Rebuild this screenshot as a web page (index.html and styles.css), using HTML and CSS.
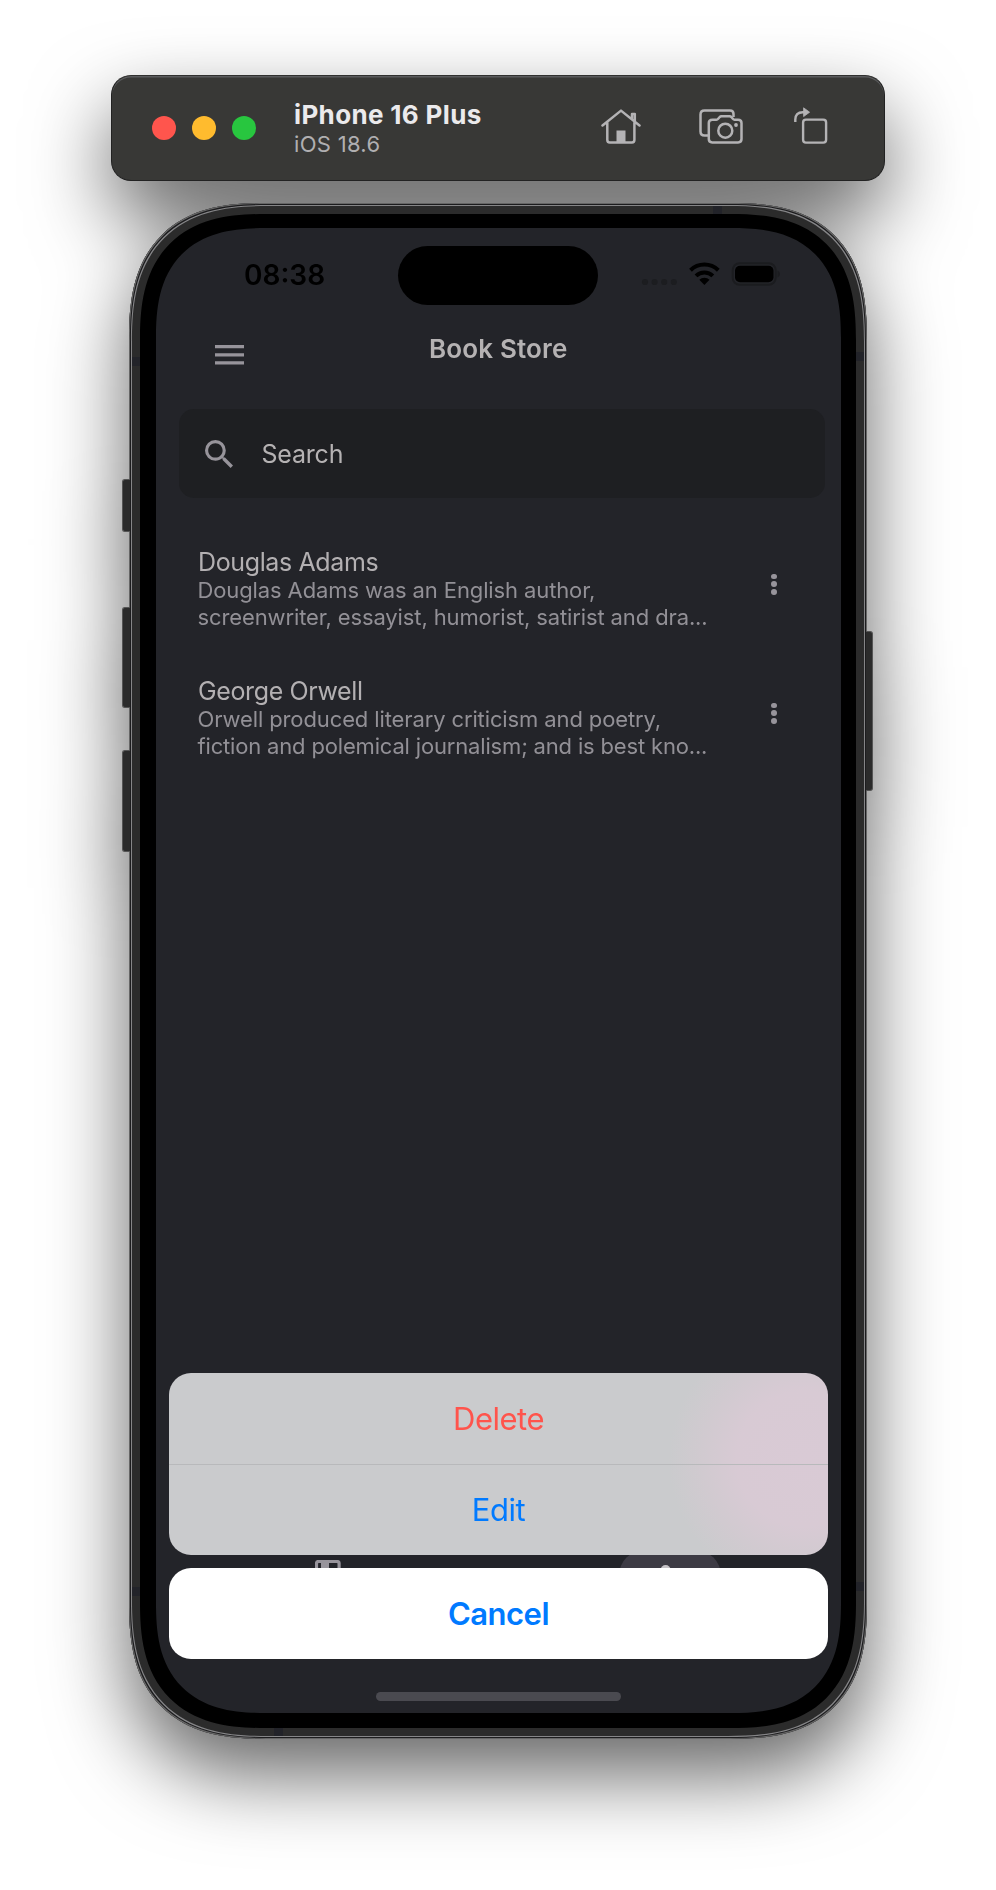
FILE: index.html
```html
<!DOCTYPE html>
<html lang="en">
<head>
<meta charset="utf-8">
<title>iPhone 16 Plus</title>
<link rel="stylesheet" href="styles.css">
</head>
<body>
<main class="simulator">
  <header class="toolbar">
    <div class="lights"><span class="light red"></span><span class="light yellow"></span><span class="light green"></span></div>
    <div class="device-info">
      <div class="device-name">iPhone 16 Plus</div>
      <div class="device-os">iOS 18.6</div>
    </div>
    <div class="tools">
      <svg class="tool-home" width="40" height="36" viewBox="0 0 40 36" fill="none" stroke="#b4b3b5" stroke-width="2.5" stroke-linecap="round" stroke-linejoin="round">
        <path d="M1.500 16.500 20 1.600 38.500 16.500M6.300 13.500V31q0 2.400 2.400 2.400H31q2.400 0 2.400-2.400V13.500M31 10V5h2.800v7.500"/>
        <path d="M15.500 21.500h9v12h-9z" fill="#b4b3b5" stroke="none"/>
      </svg>
      <svg class="tool-camera" width="44" height="36" viewBox="0 0 44 36" fill="none" stroke="#b4b3b5" stroke-width="2.500" stroke-linejoin="round">
        <path d="M9 26.500H5.500q-4 0-4-4V5.500q0-4 4-4H31q3.500 0 3.500 3.500v3"/>
        <path d="M13.400 10.700h4q1 0 1.800-1l1.300-1.500q.8-.9 2-.9h8q1.200 0 2 .9l1.300 1.500q.8 1 1.800 1h3.500q3.400 0 3.400 3.400v16q0 3.400-3.400 3.400H13.200q-3.400 0-3.400-3.400v-16q0-3.400 3.600-3.400z"/>
        <circle cx="26.300" cy="21.700" r="7"/>
        <circle cx="37" cy="16" r="1.900" fill="#b4b3b5" stroke="none"/>
      </svg>
      <svg class="tool-rotate" width="34" height="37" viewBox="0 0 34 37" fill="none" stroke="#b4b3b5" stroke-width="2.400">
        <path d="M1.300 15V12.500q0-7.300 7.500-7.300H10"/>
        <path d="M9.600.8 15.600 5.200 9.600 9.600z" fill="#b4b3b5" stroke="#b4b3b5" stroke-width=".8"/>
        <rect x="9.100" y="12.600" width="23" height="23" rx="2.800"/>
      </svg>
    </div>
  </header>

  <section class="phone">
    <i class="key action"></i><i class="key vol-up"></i><i class="key vol-down"></i><i class="key power"></i>
    <i class="band band-top"></i><i class="band band-bottom"></i>
    <i class="band band-l1"></i><i class="band band-l2"></i><i class="band band-r1"></i><i class="band band-r2"></i>
    <div class="bezel">
      <div class="screen">
        <div class="status">
          <div class="time">08:38</div>
          <div class="island"></div>
          <svg class="status-icons" width="138" height="28" viewBox="0 0 138 28">
            <g fill="#1c1d20"><circle cx="4" cy="22" r="3.100"/><circle cx="13.600" cy="22" r="3.100"/><circle cx="23.200" cy="22" r="3.100"/><circle cx="32.800" cy="22" r="3.100"/></g>
            <g fill="none" stroke="#000" stroke-width="4"><path d="M49.500 10.200a20 20 0 0 1 27.800 0"/><path d="M55 15.900a12 12 0 0 1 16.800 0"/></g>
            <path d="M58.300 19.800a7.300 7.300 0 0 1 10.200 0L63.400 25z"/>
            <rect x="91.700" y="3.200" width="43" height="21.600" rx="7" fill="none" stroke="#1b1c1f" stroke-width="2"/>
            <rect x="94" y="5.800" width="38.500" height="16.400" rx="5"/>
            <path d="M136.500 10.500q2.500 1 2.500 3.500t-2.500 3.500z" fill="#1b1c1f"/>
          </svg>
        </div>
        <div class="appbar">
          <svg class="menu" width="29" height="21" viewBox="0 0 29 21" fill="#97949b"><path d="M0 0h29v3.200H0zM0 8.200h29v3.200H0zM0 16.300h29v3.200H0z"/></svg>
          <div class="app-title">Book Store</div>
        </div>
        <div class="search">
          <svg width="28" height="28" viewBox="3 3 17.500 17.500" fill="#97949b"><path d="M15.500 14h-.79l-.28-.27A6.471 6.471 0 0 0 16 9.500 6.500 6.500 0 1 0 9.500 16c1.610 0 3.090-.59 4.230-1.570l.27.28v.79l5 4.990L20.490 19l-4.990-5zm-6 0C7.010 14 5 11.990 5 9.500S7.010 5 9.500 5 14 7.010 14 9.500 11.990 14 9.500 14z"/></svg>
          <span class="search-label">Search</span>
        </div>
        <div class="list">
          <article class="item">
            <div class="item-text">
              <div class="item-title">Douglas Adams</div>
              <div class="item-desc"><div>Douglas Adams was an English author,</div><div>screenwriter, essayist, humorist, satirist and dra...</div></div>
            </div>
            <div class="dots"><i></i><i></i><i></i></div>
          </article>
          <article class="item">
            <div class="item-text">
              <div class="item-title">George Orwell</div>
              <div class="item-desc"><div>Orwell produced literary criticism and poetry,</div><div class="tight">fiction and polemical journalism; and is best kno...</div></div>
            </div>
            <div class="dots"><i></i><i></i><i></i></div>
          </article>
        </div>
        <nav class="tabs">
          <svg class="tab-book" width="26" height="30" viewBox="0 0 26 30"><rect x="1.500" y="1.500" width="22.600" height="28" rx="2" fill="none" stroke="#97949b" stroke-width="3.200"/><path d="M6 1h8v13l-4-2-4 2z" fill="#97949b"/></svg>
          <div class="tab-pill"><svg width="38" height="38" viewBox="0 0 38 38"><circle cx="14.600" cy="13" r="5" fill="#c5c2c6"/></svg></div>
        </nav>
        <div class="sheet">
          <div class="sheet-group">
            <div class="sheet-btn delete">Delete</div>
            <div class="sheet-btn edit">Edit</div>
          </div>
          <div class="sheet-btn cancel">Cancel</div>
        </div>
        <div class="home-bar"></div>
      </div>
    </div>
  </section>
</main>
</body>
</html>
```
FILE: styles.css
```css
* { box-sizing: border-box; }
body { margin: 0; background: #fff; font-family: Inter, "Liberation Sans", sans-serif; width: 996px; height: 1890px; overflow: hidden; }
.simulator { height: 1890px; padding-top: 75px; display: flex; flex-direction: column; align-items: center; gap: 22px; filter: drop-shadow(0 36px 40px rgba(0,0,0,.6)); }

.toolbar { width: 774px; height: 106px; border-radius: 20px; background: #383836; border: 1px solid #222; border-top-color: #30302f; box-shadow: inset 0 1.500px 0 #5a5b5d; display: flex; align-items: center; padding-left: 40px; }
.lights { display: flex; gap: 16px; }
.light { width: 24px; height: 24px; border-radius: 50%; }
.red { background: #ff554d; }
.yellow { background: #ffbb2e; }
.green { background: #28c63f; }
.device-info { margin-left: 38px; width: 300px; padding-top: 1px; white-space: nowrap; }
.device-name { font-size: 26px; line-height: 30px; font-weight: 700; color: #ebeaec; letter-spacing: .35px; }
.device-os { font-size: 22px; line-height: 28px; color: #b0afb1; letter-spacing: .3px; }
.tools { display: flex; margin: -2px 0 0 7px; }
.tool-camera { margin-left: 58px; }
.tool-rotate { margin: -2px 0 0 51px; }

.phone { position: relative; width: 738px; height: 1536px; border-radius: 116px; padding: 11px; background: #2b2b2b; box-shadow: inset 0 0 0 1px #666, inset 0 0 0 2px #1c1c1e, inset 0 0 0 3px #858587; }
.bezel { height: 1514px; border-radius: 105px; background: #000; padding: 14px 15px 15px 16px; }
.key { position: absolute; width: 8px; background: #2b2b2b; border: 1.500px solid #555; border-right: 0; border-radius: 3px 0 0 3px; left: -7px; }
.action { top: 276px; height: 53px; }
.vol-up { top: 404px; height: 101px; }
.vol-down { top: 547px; height: 102px; }
.power { left: 737px; top: 428px; width: 7px; height: 160px; border: 1.500px solid #555; border-left: 0; border-radius: 0 3px 3px 0; }
.band { position: absolute; background: #222329; width: 8px; height: 9px; }
.band-top { left: 584px; top: 3px; width: 9px; height: 8px; }
.band-bottom { left: 145px; top: 1525px; width: 9px; height: 8px; }
.band-l1 { left: 3px; top: 154px; }
.band-l2 { left: 3px; top: 1384px; }
.band-r1 { left: 727px; top: 149px; }
.band-r2 { left: 727px; top: 1379px; }

.screen { position: relative; width: 685px; height: 1485px; border-radius: 90px; background: #232429; overflow: hidden; }
.status { height: 94px; display: flex; align-items: flex-start; }
.time { width: 242px; padding-left: 88px; padding-top: 29px; font-size: 28px; line-height: 36px; font-weight: 600; color: #000; }
.island { width: 200px; height: 59px; margin-top: 18px; border-radius: 30px; background: #000; }
.status-icons { margin: 32px 0 0 43px; overflow: visible; }
.appbar { height: 87px; display: flex; align-items: flex-start; }
.menu { margin: 23px 0 0 59px; }
.app-title { width: 138px; margin: 9px 0 0 185px; font-size: 26px; line-height: 36px; font-weight: 600; color: #b5b2b3; white-space: nowrap; letter-spacing: .15px; }
.search { margin: 0 16px 0 22.500px; height: 89px; border-radius: 15px; background: #1e1f22; display: flex; align-items: center; padding-left: 26px; gap: 29px; }
.search-label { font-size: 25px; color: #b5b2b3; letter-spacing: -.2px; }
.list { padding: 46px 64px 0 42px; }
.item { height: 129px; display: flex; justify-content: space-between; white-space: nowrap; }
.item-title { font-size: 25px; line-height: 36px; color: #b3b0b2; letter-spacing: -.38px; }
.item-desc { font-size: 22px; line-height: 27px; color: #929096; margin: -3.500px 0 0 -.5px; letter-spacing: -.12px; }
.tight { letter-spacing: -.17px; }
.dots { display: flex; flex-direction: column; gap: 2.200px; padding-top: 29.500px; }
.dots i { width: 5.800px; height: 5.800px; border-radius: 50%; background: #97949b; }

.tabs { position: absolute; left: 0; top: 1322px; width: 685px; height: 60px; display: flex; }
.tab-book { margin: 10px 0 0 159px; }
.tab-pill { width: 102px; height: 51px; border-radius: 26px; background: #3d3b44; margin-left: 278px; display: flex; justify-content: center; }
.tab-pill svg { margin-top: 7px; }
.sheet { position: absolute; left: 13px; top: 1145px; width: 659px; display: flex; flex-direction: column; gap: 13px; }
.sheet-group { height: 182px; border-radius: 22px; overflow: hidden; background: radial-gradient(circle 135px at 635px 86px, #d9cad5 0%, #d8cad4 50%, #d1cad0 75%, rgba(202,203,205,0) 100%), #cacbcd; }
.sheet-btn { height: 91px; line-height: 91px; text-align: center; font-size: 31px; color: #007aff; letter-spacing: -.5px; }
.sheet-group .delete { color: #ff544c; box-shadow: 0 1px 0 #b8b9bb; }
.sheet .cancel { border-radius: 22px; background: #fff; font-weight: 600; }
.home-bar { position: absolute; left: 220px; top: 1464px; width: 245px; height: 8.500px; border-radius: 5px; background: #4a4a50; }

/* Continuous-curvature corners */
@supports (corner-shape: superellipse(1.36)) {
  .phone, .bezel, .screen { corner-shape: superellipse(1.36); }
  .phone { border-radius: 137px; }
  .bezel { border-radius: 126px; }
  .screen { border-radius: 110px; }
}
```
